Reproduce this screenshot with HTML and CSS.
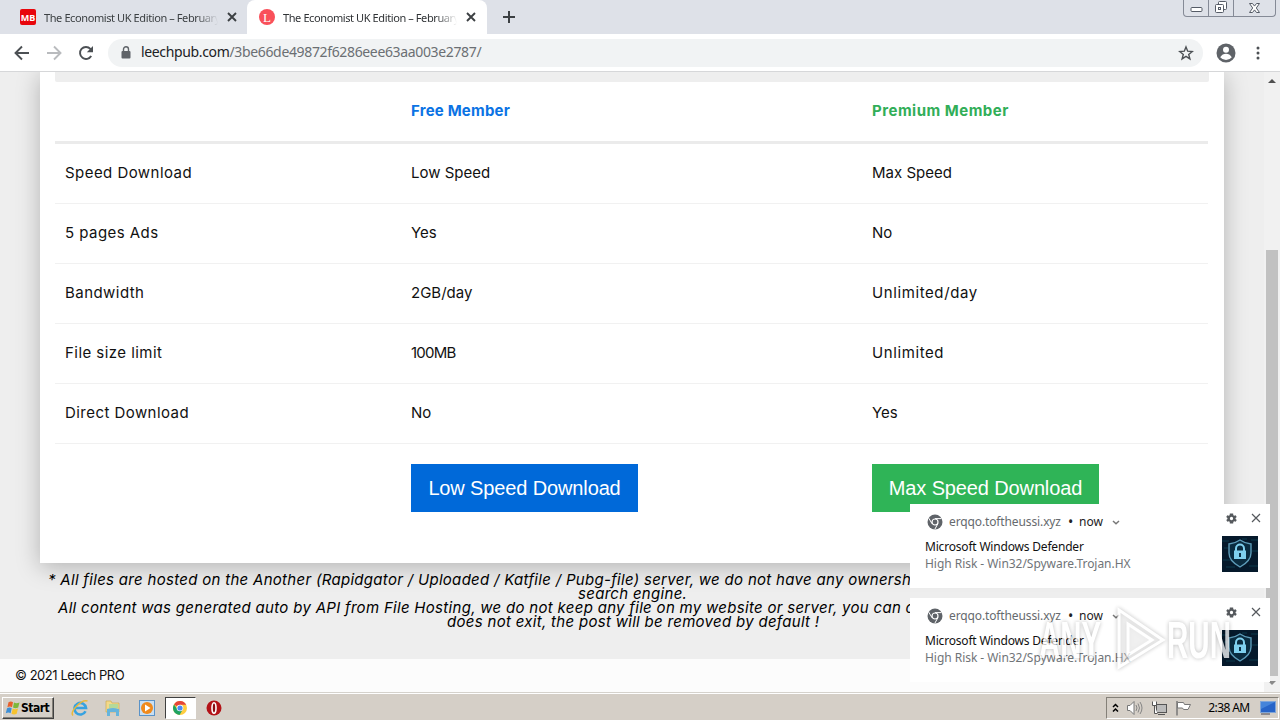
FILE: index.html
```html
<!DOCTYPE html>
<html lang="en">
<head>
    <meta charset="UTF-8">
    <meta name="viewport" content="width=device-width, initial-scale=1.0">
    <title>Leech PRO</title>
    <link rel="stylesheet" href="styles.css">
</head>
<body>
    <!-- icons used more than once -->
    <svg class="sprite" width="0" height="0">
        <symbol id="close" viewBox="0 0 10 10"><path d="M1 1l8 8M9 1L1 9" fill="none" stroke="currentColor"/></symbol>
        <symbol id="chrome-gray" viewBox="0 0 16 16">
            <circle cx="8" cy="8" r="7.5" fill="#5f6368"/>
            <path d="M8 4.6h6.4M5 9.7L1.8 4.2M10.9 9.7L7.8 15.3" stroke="#fff" stroke-width="1"/>
            <circle cx="8" cy="8" r="3" fill="#5f6368" stroke="#fff" stroke-width="1.2"/>
        </symbol>
        <symbol id="gear" viewBox="2 2 20 20">
            <path fill="currentColor" fill-rule="evenodd" d="M19.4 13a7.5 7.5 0 0 0 0-2l2.1-1.6-2-3.5-2.5 1a7 7 0 0 0-1.700-1L15 3H9l-.4 2.900a7 7 0 0 0-1.700 1l-2.500-1-2 3.500L4.600 11a7.500 7.500 0 0 0 0 2l-2.100 1.600 2 3.500 2.500-1a7 7 0 0 0 1.700 1L9 21h6l.4-2.900a7 7 0 0 0 1.700-1l2.500 1 2-3.500zM12 15a3 3 0 1 1 0-6 3 3 0 0 1 0 6z"/>
        </symbol>
        <symbol id="shield" viewBox="0 0 36 36">
            <rect width="36" height="36" fill="#05192b"/>
            <path d="M0 5h7M2 12h4M29 4h7M30 15h6M1 24h8M27 30h9M4 31h9M20 3h5" stroke="#0c3a4c"/>
            <path d="M18 4q5 3.500 11 4v9q0 8-11 14Q7 25 7 17V8q6-.5 11-4z" fill="#0a2c40" stroke="#5d9cb9" stroke-width="1.400"/>
            <path d="M14 15v-2.500a4 4 0 0 1 8 0V15" fill="none" stroke="#7fd0ee" stroke-width="2"/>
            <rect x="12" y="14.500" width="12" height="8.500" fill="#7fd0ee"/>
            <path d="M18 17v4" stroke="#0b3046" stroke-width="2"/>
        </symbol>
    </svg>

    <div class="tabstrip">
        <div class="tab">
            <svg width="16" height="16"><rect width="16" height="16" rx="2" fill="#e8060c"/><text class="mb" x="8" y="11.500" text-anchor="middle">MB</text></svg>
            <span class="tab-title">The Economist UK Edition – February</span>
            <svg class="tab-close" width="10" height="10"><use href="#close"/></svg>
        </div>
        <div class="tab active">
            <svg width="16" height="16"><circle cx="8" cy="8" r="8" fill="#f9505a"/><text class="fav-l" x="8" y="12.500" text-anchor="middle">L</text></svg>
            <span class="tab-title">The Economist UK Edition – February</span>
            <svg class="tab-close" width="10" height="10"><use href="#close"/></svg>
        </div>
        <svg class="new-tab" width="12" height="12" viewBox="0 0 12 12"><path d="M6 0v12M0 6h12" stroke="#3c4043" stroke-width="2"/></svg>
        <div class="window-buttons">
            <span><svg width="13" height="16"><rect x="1" y="7.500" width="11" height="4" rx="1" fill="#fff" stroke="#555b66"/></svg></span>
            <span><svg width="14" height="16"><rect x="4.500" y="1.500" width="8" height="8" rx="1" fill="#fff" stroke="#555b66"/><rect x="1.500" y="4.500" width="8" height="8" rx="1" fill="#fff" stroke="#555b66"/><rect x="4.500" y="7.500" width="2" height="2" fill="none" stroke="#555b66"/></svg></span>
            <span class="wide"><svg width="13" height="16"><path d="M1.500 3.500h3l2 2.600 2-2.600h3L8.300 8l3.200 4.500h-3l-2-2.600-2 2.600h-3L4.700 8z" fill="#fff" stroke="#555b66"/></svg></span>
        </div>
    </div>

    <div class="toolbar">
        <svg class="nav" width="16" height="16" viewBox="0 0 16 16"><path d="M15 8H2M8 1.500L1.500 8 8 14.500" fill="none" stroke="#4c5054" stroke-width="1.900"/></svg>
        <svg class="nav" width="16" height="16" viewBox="0 0 16 16"><path d="M1 8h13M8 1.500L14.500 8 8 14.500" fill="none" stroke="#b9bbbe" stroke-width="1.900"/></svg>
        <svg class="nav" width="16" height="16" viewBox="0 0 16 16"><path d="M13.200 11A6 6 0 1 1 12.400 3.800L14 5.500" fill="none" stroke="#4c5054" stroke-width="1.900"/><path d="M15 1v6.200H8.800z" fill="#4c5054"/></svg>
        <div class="omnibox">
            <svg width="10" height="13" viewBox="0 0 10 13"><rect x="0.500" y="5" width="9" height="7.500" rx="1" fill="#5f6368"/><path d="M2.500 5V3.300a2.500 2.500 0 0 1 5 0V5" fill="none" stroke="#5f6368" stroke-width="1.400"/></svg>
            <span class="url"><b>leechpub.com</b>/3be66de49872f6286eee63aa003e2787/</span>
            <svg width="16" height="16" viewBox="0 0 16 16"><path d="M8 1.900l1.700 4.300 4.600.3-3.600 2.900 1.200 4.500L8 11.400l-3.900 2.500 1.200-4.500L1.700 6.500l4.600-.3z" fill="none" stroke="#4c5054" stroke-width="1.400"/></svg>
        </div>
        <svg class="avatar" width="20" height="20" viewBox="0 0 20 20"><circle cx="10" cy="10" r="9.500" fill="#5f6368"/><circle cx="10" cy="6.700" r="3" fill="#fff"/><path d="M4.200 14.200q2.200-3.400 5.800-3.400t5.800 3.400Q13.500 17 10 17t-5.800-2.800z" fill="#fff"/></svg>
        <svg class="menu" width="4" height="14"><circle cx="2" cy="2" r="1.500"/><circle cx="2" cy="7" r="1.500"/><circle cx="2" cy="12" r="1.500"/></svg>
    </div>

    <div class="viewport">
        <main class="page">
            <div class="card">
                <div class="card-bar"></div>
                <table class="plans">
                    <thead>
                        <tr><th></th><th class="free">Free Member</th><th class="premium">Premium Member</th></tr>
                    </thead>
                    <tbody>
                        <tr><td>Speed Download</td><td>Low Speed</td><td>Max Speed</td></tr>
                        <tr><td>5 pages Ads</td><td>Yes</td><td>No</td></tr>
                        <tr><td>Bandwidth</td><td>2GB/day</td><td class="loose">Unlimited/day</td></tr>
                        <tr><td>File size limit</td><td class="tight">100MB</td><td class="loose">Unlimited</td></tr>
                        <tr><td>Direct Download</td><td>No</td><td>Yes</td></tr>
                        <tr class="actions">
                            <td></td>
                            <td><button class="btn btn-free">Low Speed Download</button></td>
                            <td><button class="btn btn-premium">Max Speed Download</button></td>
                        </tr>
                    </tbody>
                </table>
            </div>
            <div class="notes">
                <p class="line-a">* All files are hosted on the Another (Rapidgator / Uploaded / Katfile / Pubg-file) server, we do not have any ownership</p>
                <p class="line-b">search engine.</p>
                <p class="line-c">All content was generated auto by API from File Hosting, we do not keep any file on my website or server, you can c</p>
                <p class="line-d">does not exit, the post will be removed by default !</p>
            </div>
            <footer class="footer">© 2021 Leech PRO</footer>
        </main>
        <div class="scrollbar">
            <svg width="8" height="4"><path d="M0 4l4-4 4 4z" fill="#505050"/></svg>
            <div class="thumb"></div>
            <svg width="8" height="4"><path d="M0 0l4 4 4-4z" fill="#8a8a8a"/></svg>
        </div>
    </div>

    <div class="taskbar">
        <div class="start">
            <svg width="16" height="16" viewBox="0 0 16 16"><path d="M3.500 2.200q2.500-1.500 4.500 0L7 7.200q-2-1.400-4.600 0z" fill="#e8602c"/><path d="M9 2.500q2.400 1.500 5.500 0L13.200 7.600q-2.700 1.400-5.200 0z" fill="#7db83b"/><path d="M2 8.300q2.500-1.500 4.700 0L5.600 13.200q-2-1.400-4.800 0z" fill="#3d8fd6"/><path d="M7.700 8.600q2.400 1.500 5.300 0L11.700 13.700q-2.700 1.400-5.200 0z" fill="#f7c32e"/></svg>
            <span>Start</span>
        </div>
        <div class="launch">
            <div class="launch-item"><svg width="18" height="18" viewBox="0 0 18 18"><path d="M14.500 12.200A5.800 5.800 0 1 1 15 9H4" fill="none" stroke="#36a2e0" stroke-width="2.600"/><path d="M2 16.500C-1.500 13 10 0 16.500 2" fill="none" stroke="#e9b93a" stroke-width="1.500"/></svg></div>
            <div class="launch-item"><svg width="18" height="18" viewBox="0 0 18 18"><path d="M2 2h5l1 2h7v9H2z" fill="#f2d98a" stroke="#c9a545" stroke-width=".6"/><path d="M5 5h9v4H5z" fill="#b4d99a"/><path d="M3 10q6-2 12 0v7h-3v-4H6v4H3z" fill="#65b4dc"/></svg></div>
            <div class="launch-item"><svg width="18" height="18" viewBox="0 0 18 18"><rect x="1.500" y="1.500" width="15" height="15" fill="#c9dff2" stroke="#5a93c8"/><circle cx="9" cy="9" r="6" fill="#f08a1c"/><path d="M7 5.500L12.500 9 7 12.500z" fill="#fff"/></svg></div>
            <div class="launch-item pressed"><svg width="16" height="16" viewBox="0 0 16 16"><circle cx="8" cy="8" r="7" fill="#ffcd40"/><path d="M8 8L2 4.400A7 7 0 0 1 14.200 4.800H8z" fill="#e5443a"/><path d="M2 4.400A7 7 0 0 0 7.500 15l3.300-5.400L8 8 5.500 9.500z" fill="#1ea362"/><circle cx="8" cy="8" r="3.300" fill="#fff"/><circle cx="8" cy="8" r="2.600" fill="#4a8af4"/></svg></div>
            <div class="launch-item"><svg width="16" height="16" viewBox="0 0 16 16"><circle cx="8" cy="8" r="7.500" fill="#b31217"/><ellipse cx="8" cy="8" rx="2" ry="5.200" fill="#8b0d12" stroke="#fff" stroke-width="1.600"/></svg></div>
        </div>
        <div class="tray">
            <svg width="7" height="10" viewBox="0 0 7 10"><path d="M1 4l2.500-2.500L6 4M1 8.500L3.500 6 6 8.500" fill="none" stroke="#000" stroke-width="1.500"/></svg>
            <svg width="18" height="16" viewBox="0 0 18 16"><path d="M1.500 5.500H4l4-4v13l-4-4H1.500z" fill="#fff" stroke="#777"/><path d="M10 5q2 3 0 6M12 3.500q3 4.500 0 9M14 2q4 6 0 12" fill="none" stroke="#858585"/></svg>
            <svg width="17" height="16" viewBox="0 0 17 16"><rect x="5.500" y="4.500" width="10" height="8" fill="#bbb" stroke="#555"/><path d="M7 14.500h7" stroke="#555"/><path d="M1.500 1.500v4h4v-4M3.500 5.500v8h3" fill="#fff" stroke="#555"/></svg>
            <svg width="17" height="16" viewBox="0 0 17 16"><path d="M2 1v14.500" stroke="#777" stroke-width="1.500"/><path d="M2.500 2.500h6l1 2h6l-2.500 5H8.500l-1-1.500h-5z" fill="#fff" stroke="#777"/></svg>
            <span class="clock">2:38 AM</span>
            <svg width="16" height="14" viewBox="0 0 16 14"><rect x=".5" y=".5" width="15" height="11" fill="#2764c8" stroke="#7fa5d8"/><path d="M1 1h14L1 8z" fill="#4584da"/><path d="M1 13h9" stroke="#445"/></svg>
        </div>
    </div>

    <!-- push notifications -->
    <div class="toasts">
        <div class="toast">
            <div class="toast-head">
                <svg width="16" height="16"><use href="#chrome-gray"/></svg>
                <span class="origin">erqqo.toftheussi.xyz</span>
                <span class="dot">•</span>
                <span class="now">now</span>
                <svg width="8" height="5"><path d="M1 1l3 2.700L7 1" fill="none" stroke="#777" stroke-width="1.500"/></svg>
                <svg class="gear" width="11" height="11"><use href="#gear"/></svg>
                <svg class="dismiss" width="10" height="10"><use href="#close"/></svg>
            </div>
            <div class="toast-body">
                <div>
                    <div class="toast-title">Microsoft Windows Defender</div>
                    <div class="toast-text">High Risk - Win32/Spyware.Trojan.HX</div>
                </div>
                <svg width="36" height="36"><use href="#shield"/></svg>
            </div>
        </div>
        <div class="toast">
            <div class="toast-head">
                <svg width="16" height="16"><use href="#chrome-gray"/></svg>
                <span class="origin">erqqo.toftheussi.xyz</span>
                <span class="dot">•</span>
                <span class="now">now</span>
                <svg width="8" height="5"><path d="M1 1l3 2.700L7 1" fill="none" stroke="#777" stroke-width="1.500"/></svg>
                <svg class="gear" width="11" height="11"><use href="#gear"/></svg>
                <svg class="dismiss" width="10" height="10"><use href="#close"/></svg>
            </div>
            <div class="toast-body">
                <div>
                    <div class="toast-title">Microsoft Windows Defender</div>
                    <div class="toast-text">High Risk - Win32/Spyware.Trojan.HX</div>
                </div>
                <svg width="36" height="36"><use href="#shield"/></svg>
            </div>
        </div>
    </div>

    <svg class="watermark" width="198" height="66" viewBox="0 0 198 66">
        <text x="2" y="52" textLength="62" lengthAdjust="spacingAndGlyphs">ANY</text>
        <text x="130" y="52" textLength="64" lengthAdjust="spacingAndGlyphs">RUN</text>
        <path d="M82 4L126 34 82 61z"/>
        <path d="M91 18L115 34 91 49z"/>
    </svg>
</body>
</html>
```
FILE: styles.css
```css
* {
    box-sizing: border-box;
}

body {
    display: flex;
    flex-direction: column;
    position: relative;
    width: 1280px;
    height: 720px;
    margin: 0;
    overflow: hidden;
    font-family: "Noto Sans", sans-serif;
    background: #eeeeee;
}

svg {
    flex: none;
    display: block;
}

.sprite {
    position: absolute;
}

/* Browser window */
.tabstrip {
    display: flex;
    height: 34px;
    padding-left: 8px;
    background: #dee1e8;
}

.tab {
    display: flex;
    align-items: center;
    width: 239px;
    height: 34px;
    padding: 0 10px 0 12px;
    font-size: 11px;
    color: #3c4043;
}

.tab.active {
    width: 240px;
    padding-right: 11px;
    background: #fff;
    border-radius: 8px 8px 0 0;
    color: #303336;
}

.tab-title {
    width: 174px;
    margin-left: 8px;
    overflow: hidden;
    white-space: nowrap;
    letter-spacing: -0.4px;
    -webkit-mask-image: linear-gradient(90deg, #000 88%, transparent);
    mask-image: linear-gradient(90deg, #000 88%, transparent);
}

.tab-close {
    margin-left: auto;
    color: #3c4043;
    stroke-width: 1.9;
}

.mb {
    font: bold 9px "Open Sans", sans-serif;
    fill: #fff;
}

.fav-l {
    font: 13px "Liberation Serif", serif;
    fill: #fff;
}

.new-tab {
    margin: 11px 0 0 16px;
}

.window-buttons {
    display: flex;
    width: 93px;
    height: 17px;
    margin: 0 4px 0 auto;
    border: 1px solid #858a96;
    border-top: 0;
    border-radius: 0 0 4px 4px;
}

.window-buttons span {
    display: flex;
    justify-content: center;
    width: 25px;
    border-right: 1px solid #858a96;
}

.window-buttons .wide {
    width: 41px;
    border-right: 0;
}

.toolbar {
    display: flex;
    align-items: center;
    height: 38px;
    padding: 0 20px 0 14px;
    background: #fff;
    border-bottom: 1px solid #d6d7d9;
}

.nav {
    margin-right: 16px;
}

.omnibox {
    display: flex;
    align-items: center;
    width: 1095px;
    height: 28px;
    margin-left: -2px;
    padding: 0 9px 0 13px;
    background: #f1f3f4;
    border-radius: 14px;
}

.url {
    flex: 1;
    margin: -2px 0 0 10px;
    font-size: 14px;
    letter-spacing: -0.35px;
    color: #6b6f73;
}

.url b {
    font-weight: normal;
    color: #202124;
}

.avatar {
    margin-left: 13px;
}

.menu {
    margin-left: auto;
    fill: #4c5054;
}

/* Page */
.viewport {
    display: flex;
    height: 620px;
}

.page {
    display: flex;
    flex-direction: column;
    width: 1264px;
    overflow: hidden;
    background: #eeeeee;
    font-family: Inter, sans-serif;
    color: #111;
}

.card {
    flex: none;
    height: 491px;
    margin: 0 40px;
    padding: 0 15px;
    background: #fff;
    box-shadow: 0 4px 22px rgba(0, 0, 0, 0.25);
}

.card-bar {
    height: 10px;
    background: #eeeeee;
    border-radius: 0 0 2px 2px;
}

.plans {
    width: 1153px;
    table-layout: fixed;
    border-collapse: separate;
    border-spacing: 0;
    font-size: 15px;
}

.plans th {
    height: 62px;
    padding: 0 10px 3px;
    text-align: left;
    letter-spacing: 0.2px;
    border-bottom: 3px solid #ebebeb;
}

.plans th:nth-child(1),
.plans th:nth-child(3) {
    width: 346px;
}

.plans td {
    height: 60px;
    padding: 0 10px 3px;
    border-bottom: 1px solid #f1f1f1;
}

.plans td:first-child {
    letter-spacing: 0.45px;
}

.plans .loose {
    letter-spacing: 0.6px;
}

.plans .tight {
    letter-spacing: -0.8px;
}

.plans .free {
    color: #0b73e4;
}

.plans .premium {
    letter-spacing: 0.5px;
    color: #31ae58;
}

.plans .actions td {
    height: 88px;
    padding-bottom: 0;
    border-bottom: 0;
}

.btn {
    display: block;
    width: 227px;
    height: 48px;
    padding: 0;
    border: 0;
    font: 20px "Liberation Sans", sans-serif;
    letter-spacing: -0.13px;
    color: #fff;
}

.btn-free {
    background: #0069d9;
}

.btn-premium {
    background: #2fb457;
}

.notes {
    height: 96px;
    padding-top: 10px;
    font-size: 15px;
    font-style: italic;
    line-height: 14px;
    letter-spacing: 0.3px;
    color: #000;
}

.notes p {
    margin: 0;
    white-space: nowrap;
}

.line-a {
    padding-left: 48px;
}

.line-b {
    padding-left: 578px;
}

.line-c {
    padding-left: 58px;
}

.line-d {
    padding-left: 447px;
}

.footer {
    flex: 1;
    padding: 8px 15px;
    background: #fcfcfc;
    font-size: 13px;
    line-height: 16px;
    letter-spacing: -0.45px;
}

.scrollbar {
    display: flex;
    flex-direction: column;
    align-items: center;
    width: 16px;
    padding: 7px 0;
    background: #f1f1f1;
}

.thumb {
    width: 12px;
    height: 426px;
    margin: auto 0 5px;
    background: #c1c1c1;
}

/* Windows taskbar */
.taskbar {
    display: flex;
    align-items: center;
    height: 28px;
    padding: 3px 1px 1px 2px;
    background: #d5cfc7;
    border-top: 1px solid #d5d2cc;
    box-shadow: inset 0 1px #fff;
}

.start {
    display: flex;
    align-items: center;
    width: 52px;
    height: 22px;
    padding-left: 2px;
    border: 1px solid;
    border-color: #fff #404040 #404040 #fff;
    box-shadow: inset -1px -1px #848078;
    font: bold 12px "DejaVu Sans Condensed", sans-serif;
    letter-spacing: -0.5px;
}

.launch {
    display: flex;
    margin-left: 10px;
}

.launch-item {
    display: flex;
    align-items: center;
    justify-content: center;
    width: 31px;
    height: 22px;
    margin-right: 2.5px;
}

.launch-item.pressed {
    background: #fff;
    border: 1px solid;
    border-color: #404040 #fff #fff #404040;
}

.tray {
    display: flex;
    align-items: center;
    width: 173px;
    height: 22px;
    margin-left: auto;
    padding: 0 2px 0 5px;
    border: 1px solid;
    border-color: #848078 #fff #fff #848078;
}

.tray svg + svg {
    margin-left: 7px;
}

.clock {
    margin: 0 auto;
    padding-left: 6px;
    font-size: 12px;
    letter-spacing: -0.6px;
}

/* Notifications */
.toasts {
    position: absolute;
    top: 504px;
    left: 910px;
    display: flex;
    flex-direction: column;
    gap: 10px;
    width: 360px;
}

.toast {
    height: 84px;
    padding: 0 12px 0 15px;
    background: #fff;
    font-size: 12px;
}

.toast-head {
    display: flex;
    align-items: center;
    height: 32px;
    padding: 4px 0 0 2px;
}

.origin {
    width: 112px;
    margin: -2px 0 0 6px;
    letter-spacing: -0.12px;
    color: #666a6e;
}

.dot {
    width: 11px;
    margin-left: 7px;
    font-size: 14px;
    line-height: 16px;
    color: #222;
}

.now {
    width: 25px;
    margin: -2px 8px 0 0;
    color: #222;
}

.toast .gear {
    margin: -8px 14px 0 auto;
    color: #55595d;
}

.dismiss {
    margin: -8px -3px 0 0;
    color: #55595d;
    stroke-width: 1.2;
}

.toast-body {
    display: flex;
    justify-content: space-between;
}

.toast-title,
.toast-text {
    height: 17px;
    line-height: 17px;
}

.toast-title {
    margin-top: 2px;
    letter-spacing: -0.19px;
    color: #111;
}

.toast-text {
    letter-spacing: -0.04px;
    color: #707478;
}

.watermark {
    position: absolute;
    top: 606px;
    left: 1037px;
    opacity: 0.75;
    filter: drop-shadow(0 0 2px rgba(0, 0, 0, 0.35));
}

.watermark text {
    font: bold 52px "Liberation Sans", sans-serif;
    fill: #fff;
}

.watermark path {
    fill: rgba(255, 255, 255, 0.4);
    stroke: #fff;
    stroke-width: 3;
}
```
